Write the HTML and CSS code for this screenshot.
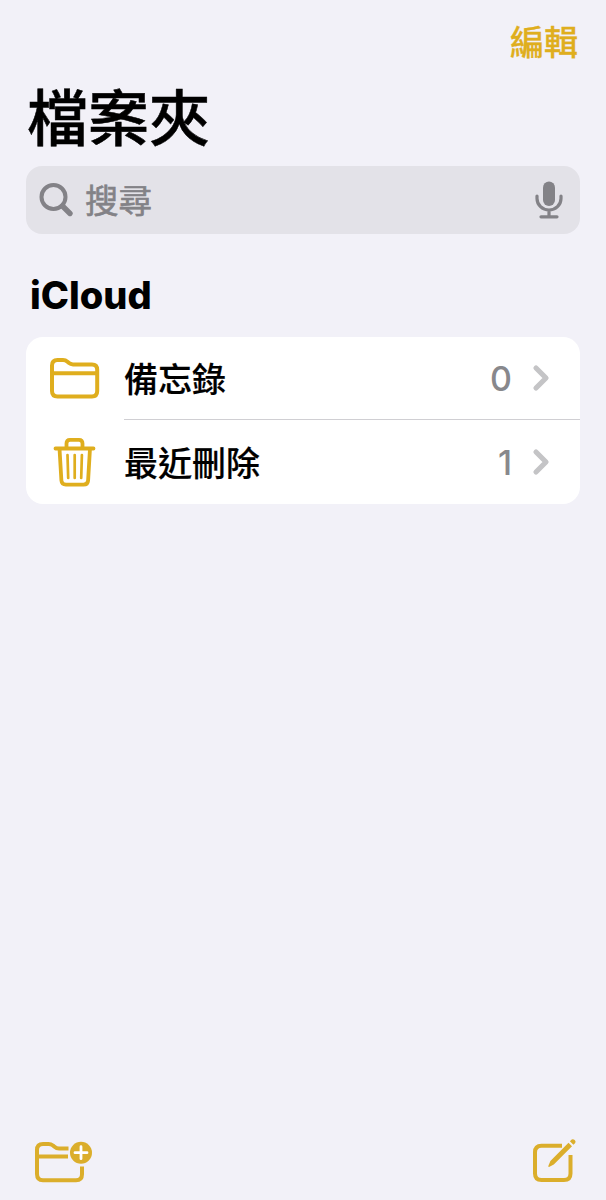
FILE: index.html
```html
<!DOCTYPE html>
<html lang="zh-Hant">
<head>
    <meta charset="UTF-8">
    <meta name="viewport" content="width=device-width, initial-scale=1.0">
    <title>檔案夾</title>
    <link rel="stylesheet" href="styles.css">
</head>
<body>
    <div class="container">
        <header class="top-bar">
            <a class="edit">編輯</a>
        </header>

        <h1>檔案夾</h1>

        <!-- Search -->
        <div class="search">
            <svg class="search-icon" width="36" height="36" viewBox="0 0 36 36">
                <circle cx="15.5" cy="15" r="12" stroke-width="4"/>
                <path d="M24.5 24L32 31.5" stroke-width="5.4"/>
            </svg>
            <span class="search-text">搜尋</span>
            <svg class="mic-icon" width="28" height="38" viewBox="0 0 28 38">
                <rect class="mic-body" x="8" y="0.5" width="12" height="24.5" rx="6"/>
                <path d="M2 15v2.5a12 11.5 0 0 0 24 0V15M14 29v6.5M6 35.8h16" stroke-width="3.2"/>
            </svg>
        </div>

        <h2>iCloud</h2>

        <!-- Folder list -->
        <div class="list">
            <div class="row">
                <svg class="row-icon" width="52" height="52" viewBox="0 -1 52 52">
                    <path d="M4 38V12.500Q4 7 9.500 7H15Q17.500 7 19.500 8.800L21 10.100Q22.500 11.400 25 11.400H44Q49.200 11.400 49.200 16.800V38Q49.200 43.400 44 43.400H9.500Q4 43.400 4 38ZM4 20.200H49.200" stroke-width="4"/>
                </svg>
                <div class="row-main">
                    <span class="name">備忘錄</span>
                    <span class="count">0</span>
                    <svg class="chevron" width="18" height="26" viewBox="0 0 18 26">
                        <path d="M3 3L13 13L3 23"/>
                    </svg>
                </div>
            </div>
            <div class="row">
                <svg class="row-icon" width="52" height="52" viewBox="0 0 52 52">
                    <path d="M7.500 12.500H45.500M18.500 12V7.500Q18.500 3.800 22 3.800H31Q34.500 3.800 34.500 7.500V12M11.500 12.500L13.400 44.500Q13.700 48.600 18 48.600H35.500Q39.800 48.600 40.100 44.500L42 12.500" stroke-width="3.800"/>
                    <path d="M19.500 19L20.200 42M26.700 19V42M33.900 19L33.200 42" stroke-width="2.700"/>
                </svg>
                <div class="row-main">
                    <span class="name">最近刪除</span>
                    <span class="count">1</span>
                    <svg class="chevron" width="18" height="26" viewBox="0 0 18 26">
                        <path d="M3 3L13 13L3 23"/>
                    </svg>
                </div>
            </div>
        </div>

        <!-- Toolbar -->
        <footer class="toolbar">
            <svg class="tool-icon" width="60" height="46" viewBox="0 0 60 46">
                <path class="flat" d="M34.500 8.500H25Q22.500 8.500 20.500 6.800L19 5.500Q17 4 14.500 4H9Q3 4 3 10V34Q3 40.200 9 40.200H42Q48 40.200 48 34.200V26.500M3 16.500H34" stroke-width="4"/>
                <circle class="badge" cx="47" cy="12.700" r="11"/>
                <path class="plus" d="M41 12.700H53M47 6.700V18.700" stroke-width="2.800"/>
            </svg>
            <svg class="tool-icon" width="46" height="46" viewBox="0 0 46 46">
                <path class="flat" d="M31 5.800H10.500Q4 5.800 4 12.300V33.500Q4 40 10.500 40H33Q39.500 40 39.500 33.500V15" stroke-width="4"/>
                <path class="pencil" d="M37.500 2.700L41 6.200L22.800 24.600L18.500 26.800Q17 27.300 17.400 25.700L19.400 21ZM38.900 1.300L40.700 -0.400Q42 -1.500 43.700 0Q45.200 1.700 44.200 3.100L42.400 4.800Z"/>
            </svg>
        </footer>
    </div>
</body>
</html>
```
FILE: styles.css
```css
* {
    box-sizing: border-box;
}

body {
    margin: 0;
    background-color: #f2f1f8;
    color: #000;
    font-family: Inter, "Noto Sans CJK TC", sans-serif;
}

svg {
    display: block;
    flex: none;
    overflow: visible;
    fill: none;
    stroke-linecap: round;
    stroke-linejoin: round;
}

.container {
    display: flex;
    flex-direction: column;
    height: 1200px;
    padding: 0 26px;
}

.top-bar {
    display: flex;
    justify-content: flex-end;
    height: 82px;
    padding: 18px 2px 0 0;
}

.edit {
    color: #dfae1e;
    font-size: 34px;
    font-weight: 500;
    line-height: 50px;
    -webkit-text-stroke: 0.3px #dfae1e;
}

h1 {
    height: 84px;
    margin: 0;
    padding: 2px 0 0 1px;
    font-size: 61px;
    font-weight: 500;
    line-height: 70px;
    -webkit-text-stroke: 0.5px #000;
}

.search {
    display: flex;
    align-items: center;
    height: 68px;
    padding: 0 17px 0 12px;
    border-radius: 16px;
    background-color: #e3e2e8;
    color: #838287;
}

.search-icon,
.mic-icon {
    stroke: #838287;
}

.mic-body {
    fill: #838287;
    stroke: none;
}

.search-text {
    flex: 1;
    margin-left: 11px;
    padding-top: 1px;
    font-size: 33.5px;
    line-height: 50px;
    -webkit-text-stroke: 0.6px #838287;
}

h2 {
    height: 103px;
    margin: 0;
    padding: 36px 0 0 4px;
    font-size: 38px;
    font-weight: 800;
    line-height: 50px;
}

.list {
    border-radius: 17px;
    background-color: #fff;
}

.row {
    display: flex;
    align-items: center;
    height: 82px;
    padding-left: 22px;
}

.row-icon {
    stroke: #dfae1e;
}

.row-main {
    display: flex;
    flex: 1;
    align-items: center;
    height: 100%;
    margin-left: 24px;
    padding-right: 29px;
}

.row + .row {
    height: 85px;
}

.row + .row .row-main {
    border-top: 1px solid #d0cfd3;
}

.name {
    flex: 1;
    padding-bottom: 2px;
    font-size: 34px;
    font-weight: 500;
    -webkit-text-stroke: 0.2px #000;
}

.count {
    margin-right: 21px;
    color: #88888c;
    font-size: 34px;
    font-weight: 500;
}

.chevron {
    stroke: #c4c4c6;
    stroke-width: 5.2;
}

.toolbar {
    display: flex;
    justify-content: space-between;
    margin-top: auto;
    padding: 0 3px 14px 8px;
}

.tool-icon {
    stroke: #dbae2b;
}

.flat {
    stroke-linecap: butt;
}

.badge,
.pencil {
    fill: #dbae2b;
    stroke: none;
}

.plus {
    stroke: #fff;
}
```
